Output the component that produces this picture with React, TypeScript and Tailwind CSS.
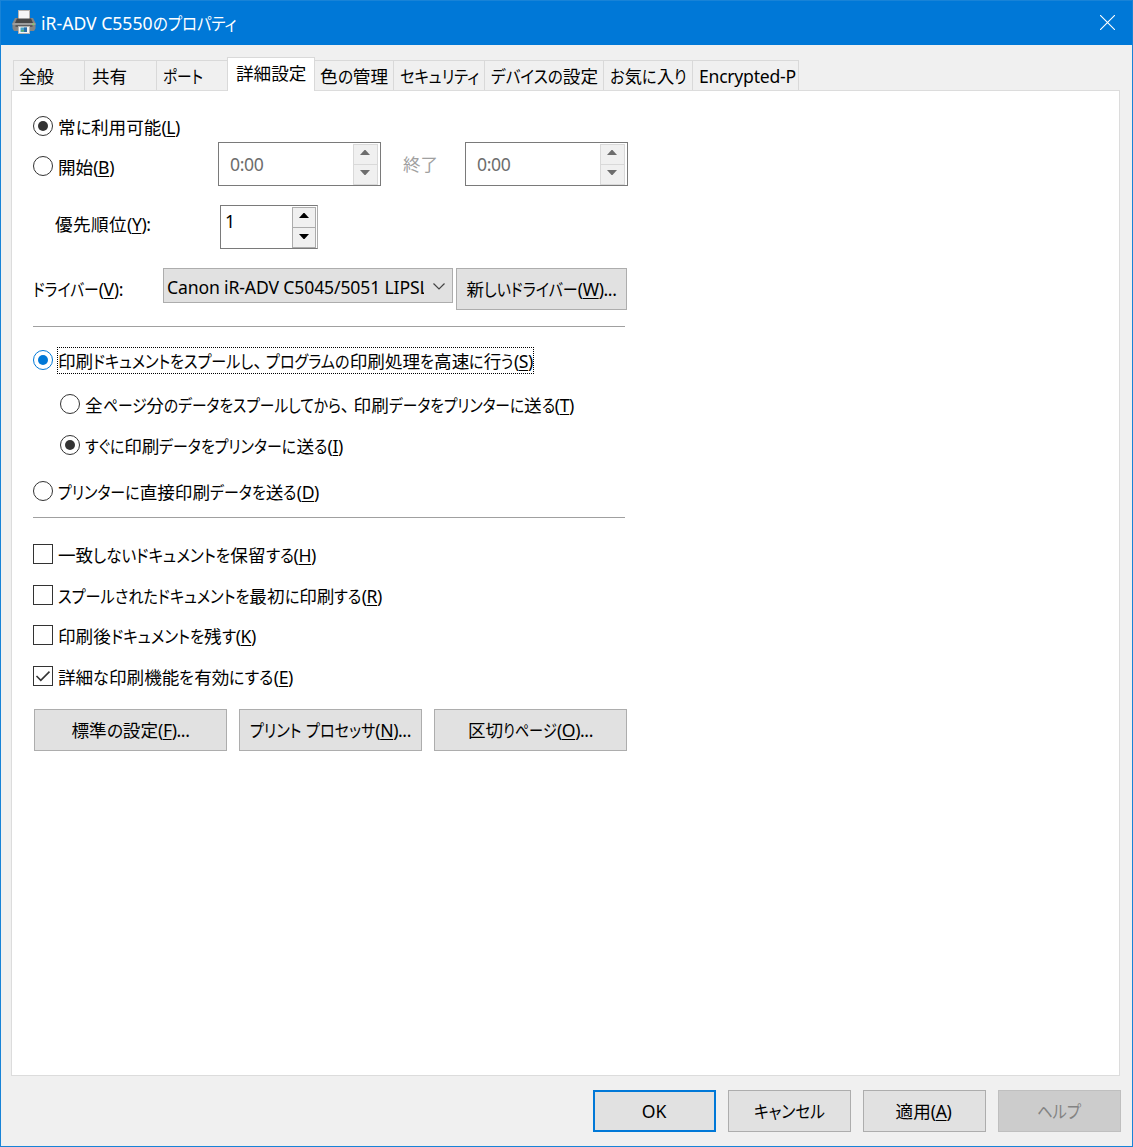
import React, { useLayoutEffect, useRef, useState } from "react";

const FONT =
  "font-['Noto_Sans','Noto_Sans_CJK_JP',sans-serif] [font-feature-settings:'palt']";

type LabelProps = {
  text: string;
  accel?: string;
  tail?: string;
  width?: number;
  className?: string;
};

const KANA = /^[\u3041-\u30fc]/;

// text followed by an optional "(X)" access key,
// with a width the kana are condensed until the whole line fits it
const Label = ({ text, accel, tail = "", width, className = "" }: LabelProps) => {
  const ref = useRef<HTMLSpanElement>(null);
  const [fit, setFit] = useState<{ scale: number; widths: number[] } | null>(null);
  const runs = text.split(/([\u3041-\u30fc]+|、)/).filter(Boolean);

  useLayoutEffect(() => {
    if (!width || !ref.current) return;
    const kana = Array.from(ref.current.querySelectorAll("[data-kana]"));
    const widths = kana.map((el) => el.getBoundingClientRect().width);
    const sum = widths.reduce((a, b) => a + b, 0);
    const rest = ref.current.getBoundingClientRect().width - sum;
    if (sum > 0) setFit({ scale: (width - rest) / sum, widths });
  }, [text, width]);

  let index = 0;
  return (
    <span className={`block whitespace-pre leading-6 ${className}`}>
      <span ref={ref} className="inline-block">
        {runs.map((run, i) => {
          if (run === "、") {
            return (
              <span key={i} className="pr-1">
                {run}
              </span>
            );
          }
          if (!KANA.test(run) || !width) return <span key={i}>{run}</span>;
          const n = index++;
          return (
            <span
              key={i}
              className="inline-block"
              style={fit ? { width: fit.widths[n] * fit.scale } : undefined}
            >
              <span
                data-kana
                className="inline-block origin-left"
                style={fit ? { transform: `scaleX(${fit.scale})` } : undefined}
              >
                {run}
              </span>
            </span>
          );
        })}
        {accel && (
          <span className="tracking-[-0.4px]">
            (
            <span className="underline decoration-1 underline-offset-2">
              {accel}
            </span>
            ){tail}
          </span>
        )}
      </span>
    </span>
  );
};

const Radio = ({ checked = false, focused = false, className = "" }) => (
  <span
    className={`flex h-5 w-5 shrink-0 items-center justify-center rounded-full border bg-white ${
      focused ? "border-[#0078d7]" : "border-[#333333]"
    } ${className}`}
  >
    {checked && (
      <span
        className={`h-2.5 w-2.5 rounded-full ${focused ? "bg-[#0078d7]" : "bg-[#333333]"}`}
      />
    )}
  </span>
);

const Checkbox = ({ checked = false }) => (
  <span className="flex h-5 w-5 shrink-0 items-center justify-center border border-[#333333] bg-white">
    {checked && (
      <svg width="18" height="18" viewBox="0 0 18 18" fill="none">
        <path d="M2.5 9 L6.8 13.3 L15.5 4.6" stroke="#333333" strokeWidth="1.6" />
      </svg>
    )}
  </span>
);

const Arrow = ({ down = false, disabled = false }) => (
  <svg width="10" height="5" viewBox="0 0 10 5">
    <path
      d={down ? "M0 0 H10 L5.5 5 H4.5 Z" : "M0 5 H10 L5.5 0 H4.5 Z"}
      fill={disabled ? "#6d6d6d" : "#000000"}
    />
  </svg>
);

const Spinner = ({ disabled = false }) => {
  const button = `flex h-[21px] items-start border bg-[#f0f0f0] pl-1.5 ${
    disabled ? "w-[25px] border-[#d9d9d9]" : "w-6 border-[#acacac]"
  }`;
  return (
    <div className="flex flex-col">
      <div className={`${button} pt-[5px]`}>
        <Arrow disabled={disabled} />
      </div>
      <div className={`${button} -mt-px ${disabled ? "pt-[5px]" : "pt-1.5"}`}>
        <Arrow down disabled={disabled} />
      </div>
    </div>
  );
};

const TimeField = () => (
  <div className="flex h-11 w-[163px] items-center justify-between border border-[#7a7a7a] bg-white pl-[11px] pr-0.5 text-[#6d6d6d]">
    <Label text="0:00" className="tracking-[-0.4px]" />
    <Spinner disabled />
  </div>
);

const Button = ({
  children,
  className = "border border-[#adadad] bg-[#e1e1e1]",
}: {
  children: React.ReactNode;
  className?: string;
}) => (
  <button className={`flex h-[42px] shrink-0 items-center justify-center ${className}`}>
    {children}
  </button>
);

const PrinterIcon = () => (
  <svg width="24" height="24" viewBox="0 0 24 24" className="mb-0.5">
    <rect x="6.5" y="0.5" width="11" height="9" fill="#f6f6f6" stroke="#b8b4b0" />
    <path d="M3 8 H6 V10 H18 V8 H21 L23.5 13 V18.5 L22 21 H2 L0.5 18.5 V13 Z" fill="#858585" />
    <path d="M5 8.5 H19 L21 13 H3 Z" fill="#484848" />
    <rect x="0.5" y="13" width="23" height="2" fill="#9c9c9c" />
    <rect x="3.5" y="15" width="17" height="2" fill="#5c5c5c" />
    <rect x="20.5" y="13.5" width="1.5" height="1.5" fill="#7ed957" />
    <rect x="6.5" y="16.5" width="11" height="7" fill="#f4f4f4" stroke="#b0b0b0" />
    <rect x="8.5" y="17.5" width="6.5" height="4.5" fill="#4aa3c7" />
    <rect x="12" y="17.5" width="3" height="4.5" fill="#2b6ca8" />
    <rect x="9" y="20" width="3" height="1.5" fill="#58ad70" />
  </svg>
);

const tabs = [
  { text: "全般", width: "w-[72px] pl-[5px]" },
  { text: "共有", width: "w-[73px] pl-[7px]" },
  { text: "ポート", width: "w-[72px] pl-1.5", fit: 40 },
  { text: "詳細設定", width: "w-[88px] pl-2", active: true },
  { text: "色の管理", width: "w-20 pl-[5px]", fit: 68 },
  { text: "セキュリティ", width: "w-[92px] pl-1.5", fit: 79 },
  { text: "デバイスの設定", width: "w-[120px] pl-1.5", fit: 107 },
  { text: "お気に入り", width: "w-[90px] pl-1.5", fit: 77 },
  { text: "Encrypted-P", width: "w-[107px] pl-1.5 tracking-[-0.25px]" },
];

const App = () => (
  <div
    className={`flex h-[1147px] w-[1133px] flex-col border border-[#1883d7] bg-[#f0f0f0] text-[17.6px] text-black ${FONT}`}
  >
    <header className="flex h-11 shrink-0 items-center justify-between bg-[#0078d7] pl-[11px] pr-[17px] text-white">
      <div className="flex items-center gap-[5px]">
        <PrinterIcon />
        <Label text="iR-ADV C5550のプロパティ" width={195} />
      </div>
      <svg width="15" height="15" viewBox="0 0 15 15" stroke="#ffffff" strokeWidth="1.1" className="mb-px">
        <path d="M0 0 L15 15 M15 0 L0 15" />
      </svg>
    </header>

    <nav className="flex h-[45px] shrink-0 items-end pl-3">
      {tabs.map((tab) =>
        tab.active ? (
          <div
            key={tab.text}
            className={`z-10 -mr-px -mb-px flex h-[34px] items-start border border-b-0 border-[#d9d9d9] bg-white pt-[3px] ${tab.width}`}
          >
            <Label text={tab.text} />
          </div>
        ) : (
          <div
            key={tab.text}
            className={`-mr-px flex h-[30px] items-start border border-b-0 border-[#d9d9d9] pt-[3px] ${tab.width}`}
          >
            <Label text={tab.text} width={tab.fit} />
          </div>
        )
      )}
    </nav>

    <main className="ml-2.5 flex h-[986px] w-[1109px] shrink-0 flex-col border border-[#dcdcdc] bg-white pl-[21px]">
      <div className="flex h-[51px] items-start gap-[5px] pt-[25px]">
        <Radio checked />
        <Label text="常に利用可能" accel="L" width={122} className="-mt-px" />
      </div>
      <div className="flex h-11 items-center">
        <div className="flex w-[185px] items-center gap-[5px] pt-1">
          <Radio />
          <Label text="開始" accel="B" className="pt-0.5" />
        </div>
        <TimeField />
        <Label text="終了" className="w-[84px] pl-[22px] text-[#a0a0a0]" />
        <TimeField />
      </div>

      <div className="mt-[19px] flex h-11 items-center pl-[22px]">
        <Label
          text="優先順位"
          accel="Y"
          tail=":"
          className="w-[165px] pb-[7px] tracking-[0.4px]"
        />
        <div className="flex h-11 w-[98px] items-start justify-between border border-[#7a7a7a] border-r-[#acacac] bg-white pt-px pr-px pl-1">
          <Label text="1" className="pt-0.5" />
          <Spinner />
        </div>
      </div>

      <div className="mt-[19px] flex h-[42px] items-start">
        <Label
          text="ドライバー"
          accel="V"
          tail=":"
          width={90}
          className="w-[130px] pt-[9px]"
        />
        <div className="flex h-[35px] w-[290px] items-center justify-between border border-[#adadad] bg-[#e1e1e1] pt-0.5 pr-[7px] pl-[3px]">
          <Label
            text="Canon iR-ADV C5045/5051 LIPSL"
            className="w-[257px] overflow-hidden tracking-[-0.14px]"
          />
          <svg width="12" height="7" viewBox="0 0 12 7" fill="none" stroke="#444444" strokeWidth="1.2">
            <path d="M0.5 0.5 L6 6 L11.5 0.5" />
          </svg>
        </div>
        <Button className="ml-[3px] w-[171px] border border-[#adadad] bg-[#e1e1e1]">
          <Label text="新しいドライバー" accel="W" tail="..." width={150} />
        </Button>
      </div>

      <hr className="mt-4 w-[592px] border-[#a0a0a0]" />

      <div className="mt-[19px] flex h-[29px] items-start gap-1 pt-px">
        <Radio checked focused className="mt-[3px]" />
        <span className="flex h-[27px] w-[477px] items-center border border-dotted border-black">
          <Label
            text="印刷ドキュメントをスプールし、プログラムの印刷処理を高速に行う"
            accel="S"
            width={475}
          />
        </span>
      </div>
      <div className="mt-[17px] flex h-6 items-center gap-[5px] pl-[27px]">
        <Radio />
        <Label
          text="全ページ分のデータをスプールしてから、印刷データをプリンターに送る"
          accel="T"
          width={489}
          className="pt-0.5"
        />
      </div>
      <div className="mt-[17px] flex h-6 items-center gap-[5px] pl-[27px]">
        <Radio checked />
        <Label
          text="すぐに印刷データをプリンターに送る"
          accel="I"
          width={258}
          className="pt-0.5"
        />
      </div>
      <div className="mt-[22px] flex h-6 items-center gap-[5px]">
        <Radio />
        <Label
          text="プリンターに直接印刷データを送る"
          accel="D"
          width={261}
          className="pt-0.5"
        />
      </div>

      <hr className="mt-3.5 w-[592px] border-[#a0a0a0]" />

      <div className="mt-6 flex h-6 items-center gap-[5px]">
        <Checkbox />
        <Label
          text="一致しないドキュメントを保留する"
          accel="H"
          width={258}
          className="pt-0.5"
        />
      </div>
      <div className="mt-[17px] flex h-6 items-center gap-[5px]">
        <Checkbox />
        <Label
          text="スプールされたドキュメントを最初に印刷する"
          accel="R"
          width={324}
          className="pt-0.5"
        />
      </div>
      <div className="mt-4 flex h-6 items-center gap-[5px]">
        <Checkbox />
        <Label text="印刷後ドキュメントを残す" accel="K" width={198} className="pt-0.5" />
      </div>
      <div className="mt-[17px] flex h-6 items-center gap-[5px]">
        <Checkbox checked />
        <Label text="詳細な印刷機能を有効にする" accel="E" width={235} className="pt-0.5" />
      </div>

      <div className="mt-[21px] ml-px flex gap-3">
        <Button className="w-[193px] border border-[#adadad] bg-[#e1e1e1]">
          <Label text="標準の設定" accel="F" tail="..." width={118} />
        </Button>
        <Button className="w-[183px] border border-[#adadad] bg-[#e1e1e1]">
          <Label text="プリント プロセッサ" accel="N" tail="..." width={161} />
        </Button>
        <Button className="w-[193px] border border-[#adadad] bg-[#e1e1e1]">
          <Label text="区切りページ" accel="O" tail="..." width={125} />
        </Button>
      </div>
    </main>

    <footer className="mt-[14px] flex justify-end gap-3 pr-[11px]">
      <Button className="w-[123px] border-2 border-[#0078d7] bg-[#e1e1e1]">
        <Label text="OK" className="pr-px" />
      </Button>
      <Button className="w-[123px] border border-[#adadad] bg-[#e1e1e1]">
        <Label text="キャンセル" width={71} />
      </Button>
      <Button className="w-[123px] border border-[#adadad] bg-[#e1e1e1]">
        <Label text="適用" accel="A" className="pr-0.5" />
      </Button>
      <Button className="w-[123px] border border-[#bfbfbf] bg-[#cccccc] text-[#838383]">
        <Label text="ヘルプ" width={44} className="pr-0.5" />
      </Button>
    </footer>
  </div>
);

export default App;
